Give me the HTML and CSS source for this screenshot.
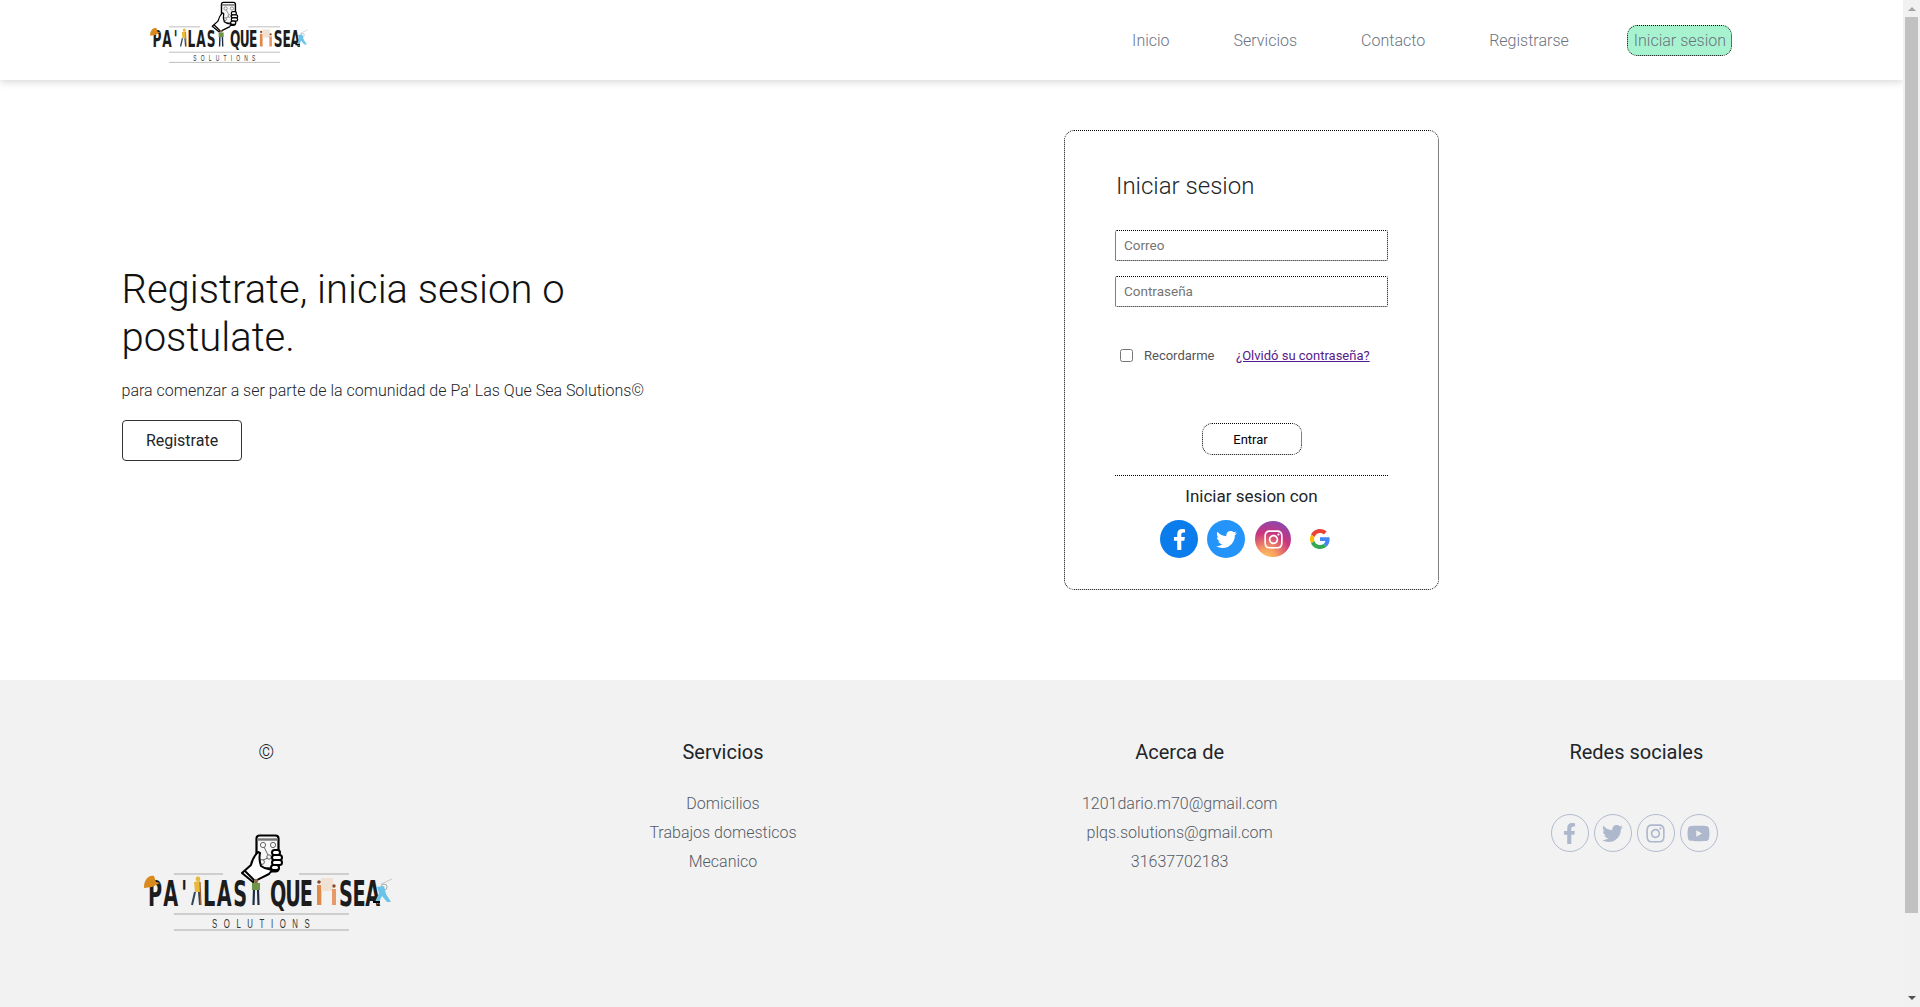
FILE: index.html
```html
<!DOCTYPE html>
<html lang="es">
<head>
  <meta charset="UTF-8" />
  <meta name="viewport" content="width=device-width, initial-scale=1.0" />
  <title>Pa' Las Que Sea Solutions</title>
  <link rel="stylesheet" href="styles.css">
</head>
<body>
  <svg class="sprite" xmlns="http://www.w3.org/2000/svg">
    <symbol id="i-facebook" viewBox="0 0 320 512"><path d="M279.14 288l14.22-92.66h-88.91v-60.13c0-25.35 12.42-50.06 52.24-50.06h40.42V6.26S260.43 0 225.36 0c-73.22 0-121.08 44.38-121.08 124.72v70.62H22.89V288h81.39v224h100.17V288z"/></symbol>
    <symbol id="i-twitter" viewBox="0 0 512 512"><path d="M459.37 151.716c.325 4.548.325 9.097.325 13.645 0 138.72-105.583 298.558-298.558 298.558-59.452 0-114.68-17.219-161.137-47.106 8.447.974 16.568 1.299 25.34 1.299 49.055 0 94.213-16.568 130.274-44.832-46.132-.975-84.792-31.188-98.112-72.772 6.498.974 12.995 1.624 19.818 1.624 9.421 0 18.843-1.3 27.614-3.573-48.081-9.747-84.143-51.98-84.143-102.985v-1.299c13.969 7.797 30.214 12.67 47.431 13.319-28.264-18.843-46.781-51.005-46.781-87.391 0-19.492 5.197-37.36 14.294-52.954 51.655 63.675 129.3 105.258 216.365 109.807-1.624-7.797-2.599-15.918-2.599-24.04 0-57.828 46.782-104.934 104.934-104.934 30.213 0 57.502 12.67 76.67 33.137 23.715-4.548 46.456-13.32 66.599-25.34-7.798 24.366-24.366 44.833-46.132 57.827 21.117-2.273 41.584-8.122 60.426-16.243-14.292 20.791-32.161 39.308-52.628 54.253z"/></symbol>
    <symbol id="i-instagram" viewBox="0 0 448 512"><path d="M224.1 141c-63.6 0-114.9 51.3-114.9 114.9s51.3 114.9 114.9 114.9S339 319.5 339 255.9 287.7 141 224.1 141zm0 189.6c-41.1 0-74.7-33.5-74.7-74.7s33.5-74.7 74.7-74.7 74.7 33.5 74.7 74.7-33.6 74.7-74.7 74.7zm146.4-194.3c0 14.9-12 26.8-26.8 26.8-14.9 0-26.8-12-26.8-26.8s12-26.8 26.8-26.8 26.8 12 26.8 26.8zm76.1 27.2c-1.7-35.9-9.9-67.7-36.2-93.9-26.2-26.2-58-34.4-93.9-36.2-37-2.1-147.9-2.1-184.9 0-35.8 1.7-67.6 9.9-93.9 36.1s-34.4 58-36.2 93.9c-2.1 37-2.1 147.9 0 184.9 1.7 35.9 9.9 67.7 36.2 93.9s58 34.4 93.9 36.2c37 2.1 147.9 2.1 184.9 0 35.9-1.7 67.7-9.9 93.9-36.2 26.2-26.2 34.4-58 36.2-93.9 2.1-37 2.1-147.8 0-184.8zM398.8 388c-7.8 19.6-22.9 34.7-42.6 42.6-29.5 11.7-99.5 9-132.1 9s-102.7 2.6-132.1-9c-19.6-7.8-34.7-22.9-42.6-42.6-11.7-29.5-9-99.5-9-132.1s-2.6-102.7 9-132.1c7.8-19.6 22.9-34.7 42.6-42.6 29.5-11.7 99.5-9 132.1-9s102.7-2.6 132.1 9c19.6 7.8 34.7 22.9 42.6 42.6 11.7 29.5 9 99.5 9 132.1s2.7 102.7-9 132.1z"/></symbol>
    <symbol id="i-youtube" viewBox="0 0 576 512"><path d="M549.655 124.083c-6.281-23.65-24.787-42.276-48.284-48.597C458.781 64 288 64 288 64S117.22 64 74.629 75.486c-23.497 6.322-42.003 24.947-48.284 48.597-11.412 42.867-11.412 132.305-11.412 132.305s0 89.438 11.412 132.305c6.281 23.65 24.787 41.5 48.284 47.821C117.22 448 288 448 288 448s170.78 0 213.371-11.486c23.497-6.321 42.003-24.171 48.284-47.821 11.412-42.867 11.412-132.305 11.412-132.305s0-89.438-11.412-132.305zm-317.51 213.508V175.185l142.739 81.205-142.739 81.201z"/></symbol>

    <symbol id="logo" viewBox="-4 0 260 105">
      <!-- rules -->
      <g stroke="#a9a9a9" stroke-width="1.2">
        <path d="M34 42H83M159 42H209M34 82H209M34 98H209"/>
      </g>
      <!-- phone and hand -->
      <rect x="116.500" y="3.500" width="22" height="36" rx="3" fill="#f7f7f7" stroke="#000" stroke-width="2.200"/>
      <path d="M117 7.500H138" stroke="#777" stroke-width="2.400"/>
      <path d="M124 36H131" stroke="#000" stroke-width="1.400"/>
      <g fill="none" stroke="#666" stroke-width="1">
        <circle cx="123" cy="13" r="2.600"/><circle cx="133" cy="13" r="2.600"/><circle cx="122" cy="30" r="2.400"/><circle cx="129" cy="25" r="2.200"/>
        <path d="M123 28L128 26M124 15L128 23"/>
      </g>
      <path d="M102 41L111 33C112 28 114 24 118 20L120 21C119 26 119 29 121 34C125 37 129 38 133 37L129 42L113 50Z" fill="#fff" stroke="#000" stroke-width="2" stroke-linejoin="round"/>
      <path d="M105 39L115 49" stroke="#000" stroke-width="2"/>
      <g fill="#fff" stroke="#000" stroke-width="2">
        <rect x="132" y="18" width="8" height="5" rx="2.500"/>
        <rect x="132" y="23" width="10" height="5" rx="2.500"/>
        <rect x="132" y="28" width="10" height="5" rx="2.500"/>
        <rect x="131" y="33" width="8" height="5" rx="2.500"/>
      </g>
      <!-- wordmark -->
      <g class="logo-word">
        <text transform="translate(8 74) scale(.55 1)" textLength="71">PA'</text>
        <text transform="translate(63 74) scale(.55 1)" textLength="80">LAS</text>
        <text transform="translate(130 74) scale(.55 1)" textLength="78">QUE</text>
        <text transform="translate(199 74) scale(.55 1)" textLength="75">SEA</text>
      </g>
      <text class="logo-sub" transform="translate(72 96) scale(.6 1)" textLength="163">SOLUTIONS</text>
      <!-- helmet -->
      <path d="M4 56C4 47 9 43 14 44L16 50L20 51L12 55Z" fill="#d98a1f"/>
      <!-- worker with drill -->
      <circle cx="58" cy="47" r="2.400" fill="#e8b93a"/>
      <path d="M54 50L60 49L60 60L55 60Z" fill="#e8b93a"/>
      <path d="M55 60L52 73M59 60L60 73" stroke="#33475b" stroke-width="2"/>
      <path d="M60 50L61 73" stroke="#a0622d" stroke-width="1.200"/>
      <!-- worker with box -->
      <circle cx="116" cy="49" r="2.200" fill="#8a6a4a"/>
      <rect x="112" y="51" width="8" height="7" fill="#6f9448"/>
      <path d="M114 58L113.500 73M118 58L118.500 73" stroke="#1f2d44" stroke-width="2.200"/>
      <!-- people at a board -->
      <rect x="181" y="46" width="12" height="13" fill="#efe1d3"/>
      <path d="M181 59V73M193 59V73" stroke="#e4a58c" stroke-width="1"/>
      <circle cx="179" cy="50" r="1.800" fill="#8a4a2a"/>
      <path d="M177 53H181V73H177Z" fill="#e08a4a"/>
      <circle cx="194" cy="54" r="1.700" fill="#8a4a2a"/>
      <path d="M192 57H196V73H192Z" fill="#e69a6a"/>
      <!-- runner -->
      <circle cx="244" cy="55" r="3" fill="none" stroke="#a9a9a9"/>
      <path d="M241 52L252 47" stroke="#c8c8c8"/>
      <path d="M237 55L244 54L246 62L251 70L247 70L242 64L238 72L235 70L239 61Z" fill="#6cc3ea"/>
      <path d="M233 70L240 70" stroke="#000" stroke-width="2"/>
    </symbol>
  </svg>

  <div class="page">
    <div class="content">
      <header class="site-header">
        <svg class="logo-small"><use href="#logo"/></svg>
        <nav class="site-nav">
          <a href="#">Inicio</a>
          <a href="#">Servicios</a>
          <a href="#">Contacto</a>
          <a href="#">Registrarse</a>
          <a href="#" class="nav-cta">Iniciar sesion</a>
        </nav>
      </header>

      <main class="hero">
        <section class="hero-text">
          <h1>Registrate, inicia sesion o postulate.</h1>
          <p>para comenzar a ser parte de la comunidad de Pa' Las Que Sea Solutions©</p>
          <a href="#" class="btn-outline">Registrate</a>
        </section>

        <form class="login-card">
          <h2>Iniciar sesion</h2>
          <input type="text" class="field" placeholder="Correo">
          <input type="password" class="field" placeholder="Contraseña">
          <div class="login-options">
            <label class="remember"><input type="checkbox"> Recordarme</label>
            <a href="#" class="forgot">¿Olvidó su contraseña?</a>
          </div>
          <div class="login-submit">
            <button type="button" class="btn-enter">Entrar</button>
          </div>
          <h3>Iniciar sesion con</h3>
          <div class="login-social">
            <a href="#" class="social-round fb"><svg class="icon-f"><use href="#i-facebook"/></svg></a>
            <a href="#" class="social-round tw"><svg class="icon-t"><use href="#i-twitter"/></svg></a>
            <a href="#" class="social-round ig"><svg class="icon-i"><use href="#i-instagram"/></svg></a>
            <a href="#" class="social-google">
              <svg viewBox="0 0 48 48" class="icon-g">
                <path fill="#EA4335" d="M24 9.500c3.540 0 6.710 1.220 9.210 3.600l6.850-6.850C35.900 2.380 30.470 0 24 0 14.620 0 6.510 5.380 2.560 13.220l7.980 6.190C12.430 13.720 17.740 9.500 24 9.500z"/>
                <path fill="#4285F4" d="M46.980 24.550c0-1.570-.15-3.090-.38-4.550H24v9.020h12.940c-.58 2.960-2.260 5.480-4.780 7.180l7.730 6c4.510-4.180 7.090-10.360 7.090-17.650z"/>
                <path fill="#FBBC05" d="M10.530 28.590c-.48-1.450-.76-2.990-.76-4.590s.27-3.140.76-4.590l-7.980-6.190C.92 16.460 0 20.120 0 24c0 3.880.92 7.540 2.560 10.780l7.970-6.190z"/>
                <path fill="#34A853" d="M24 48c6.480 0 11.930-2.130 15.890-5.810l-7.730-6c-2.150 1.450-4.920 2.300-8.160 2.300-6.260 0-11.570-4.220-13.470-9.910l-7.980 6.190C6.510 42.620 14.620 48 24 48z"/>
              </svg>
            </a>
          </div>
        </form>
      </main>

      <footer class="site-footer">
        <div class="footer-col">
          <h4 class="copy-mark">©</h4>
          <svg class="logo-large"><use href="#logo"/></svg>
        </div>
        <div class="footer-col">
          <h4>Servicios</h4>
          <ul>
            <li>Domicilios</li>
            <li>Trabajos domesticos</li>
            <li>Mecanico</li>
          </ul>
        </div>
        <div class="footer-col">
          <h4>Acerca de</h4>
          <ul>
            <li>1201dario.m70@gmail.com</li>
            <li>plqs.solutions@gmail.com</li>
            <li>31637702183</li>
          </ul>
        </div>
        <div class="footer-col">
          <h4>Redes sociales</h4>
          <div class="footer-social">
            <a href="#"><svg class="icon-f"><use href="#i-facebook"/></svg></a>
            <a href="#"><svg class="icon-t"><use href="#i-twitter"/></svg></a>
            <a href="#"><svg class="icon-i"><use href="#i-instagram"/></svg></a>
            <a href="#"><svg class="icon-y"><use href="#i-youtube"/></svg></a>
          </div>
        </div>
      </footer>
    </div>

    <div class="scrollbar">
      <span class="arrow-up"></span>
      <span class="thumb"></span>
      <span class="arrow-down"></span>
    </div>
  </div>
</body>
</html>
```

FILE: styles.css
```css
* {
  box-sizing: border-box;
}

body {
  margin: 0;
  font-family: Roboto, 'Liberation Sans', sans-serif;
  font-weight: 300;
  color: #212529;
  background: #fff;
  overflow: hidden;
}

a {
  text-decoration: none;
}

.sprite {
  display: none;
}

.page {
  display: flex;
  height: 100vh;
}

.content {
  flex: 1;
  min-width: 0;
  overflow: hidden;
}

/* header */

.site-header {
  display: flex;
  justify-content: space-between;
  align-items: center;
  height: 80px;
  padding: 0 171px 0 145px;
  box-shadow: 0 2px 8px rgba(0, 0, 0, 0.16);
}

.logo-small {
  width: 165px;
  height: 67px;
  align-self: flex-start;
}

.logo-word {
  font-family: 'DejaVu Sans', sans-serif;
  font-weight: 700;
  font-size: 35px;
  fill: #1c1c1c;
}

.logo-sub {
  font-family: 'Liberation Sans', sans-serif;
  font-size: 13px;
  fill: #333;
}

.site-nav {
  display: flex;
  align-items: center;
  gap: 64px;
  font-size: 16px;
}

.site-nav a {
  color: #6b7280;
}

.site-nav .nav-cta {
  margin-left: -6px;
  padding: 0 5px 0 6px;
  height: 31px;
  line-height: 29px;
  background: #a7f3d0;
  border: 1px dotted #000;
  border-radius: 10px;
}

/* hero */

.hero {
  display: flex;
  height: 600px;
  padding: 50px 0 0 122px;
}

.hero-text {
  width: 942px;
  height: 460px;
  padding-top: 6px;
  display: flex;
  flex-direction: column;
  justify-content: center;
  align-items: flex-start;
}

.hero-text h1 {
  margin: 0 0 0 -0.5px;
  width: 500px;
  font-size: 40px;
  line-height: 48px;
  font-weight: 300;
  color: #111;
}

.hero-text p {
  margin: 17px 0 17px -0.5px;
  font-size: 16px;
  line-height: 24px;
}

.btn-outline {
  width: 120px;
  height: 41px;
  line-height: 39px;
  text-align: center;
  font-size: 16px;
  font-weight: 400;
  color: #212529;
  border: 1px solid #333;
  border-radius: 4px;
}

/* login card */

.login-card {
  width: 375px;
  height: 460px;
  padding: 41px 50px 0;
  border: 1px dotted #000;
  border-radius: 10px;
}

.login-card h2 {
  margin: 0 0 29px;
  padding-left: 1px;
  font-size: 24px;
  line-height: 29px;
  font-weight: 300;
}

.field {
  display: block;
  width: 273px;
  height: 31px;
  margin-bottom: 15px;
  padding: 0 8px 2px;
  font-family: inherit;
  font-size: 13.5px;
  font-weight: 400;
  border: 1px dotted #000;
  border-radius: 2px;
  background: #fff;
}

.field::placeholder {
  color: #757575;
}

.login-options {
  display: flex;
  align-items: center;
  margin-top: 40px;
  font-size: 13px;
  font-weight: 400;
  height: 16px;
}

.remember {
  display: flex;
  align-items: center;
  gap: 11px;
  margin-left: 5px;
  width: 116px;
  color: #555;
}

.remember input {
  width: 13px;
  height: 13px;
  margin: 0;
}

.forgot {
  color: #551a8b;
  text-decoration: underline;
}

.login-submit {
  display: flex;
  justify-content: center;
  margin-top: 60px;
  padding-bottom: 20px;
  border-bottom: 1px dotted #000;
}

.btn-enter {
  width: 100px;
  height: 32px;
  padding: 0 2px 0 0;
  font-family: inherit;
  font-size: 13px;
  font-weight: 400;
  color: #000;
  background: #fff;
  border: 1px dotted #000;
  border-radius: 10px;
}

.login-card h3 {
  margin: 10px 0 0;
  text-align: center;
  font-size: 17px;
  line-height: 20px;
  font-weight: 400;
}

.login-social {
  display: flex;
  align-items: center;
  gap: 9px;
  margin: 14px 0 0 45px;
}

.social-round {
  display: flex;
  align-items: center;
  justify-content: center;
  width: 38px;
  height: 38px;
  border-radius: 50%;
  fill: #fff;
}

.social-round.fb {
  background: #0a7ceb;
}

.social-round.tw {
  background: #2494fb;
}

.social-round.ig {
  width: 36px;
  height: 36px;
  margin-left: 1px;
  background: radial-gradient(circle at 32% 105%, #fdc468 0%, #f9a05e 22%, #c9357e 58%, #6f4fc5 100%);
}

.social-google {
  display: flex;
  margin-left: 10px;
}

.icon-g {
  width: 20px;
  height: 20px;
}

.icon-f {
  width: 13px;
  height: 21px;
}

.icon-t {
  width: 21px;
  height: 21px;
}

.icon-i {
  width: 19px;
  height: 21px;
}

.icon-y {
  width: 23px;
  height: 21px;
}

/* footer */

.site-footer {
  display: grid;
  grid-template-columns: repeat(4, 456.67px);
  height: 327px;
  padding: 60px 0 0 38px;
  background: #f2f2f2;
}

.footer-col {
  text-align: center;
}

.footer-col h4 {
  margin: 0;
  font-size: 20px;
  line-height: 24px;
  font-weight: 400;
}

.footer-col .copy-mark {
  font-weight: 300;
}

.footer-col ul {
  list-style: none;
  margin: 25px 0 0;
  padding: 0;
  font-size: 16px;
  line-height: 29px;
  color: #555b66;
}

.logo-large {
  display: block;
  width: 260px;
  height: 105px;
  margin: 68px auto 0;
}

.footer-social {
  display: flex;
  justify-content: center;
  gap: 5px;
  margin: 50px 4px 0 0;
}

.footer-social a {
  display: flex;
  align-items: center;
  justify-content: center;
  width: 38px;
  height: 38px;
  border: 1px solid #b2bccd;
  border-radius: 50%;
  fill: #aeb8cc;
}

/* scrollbar */

.scrollbar {
  display: flex;
  flex-direction: column;
  align-items: center;
  flex: 0 0 17px;
  background: #f1f1f1;
}

.arrow-up,
.arrow-down {
  width: 8px;
  height: 4px;
  border-left: 4px solid transparent;
  border-right: 4px solid transparent;
}

.arrow-up {
  margin: 7px 0 6px;
  border-bottom: 4px solid #a3a3a3;
}

.arrow-down {
  margin: auto 0 7px;
  border-top: 4px solid #505050;
}

.thumb {
  width: 13px;
  height: 896px;
  background: #c1c1c1;
}
```
